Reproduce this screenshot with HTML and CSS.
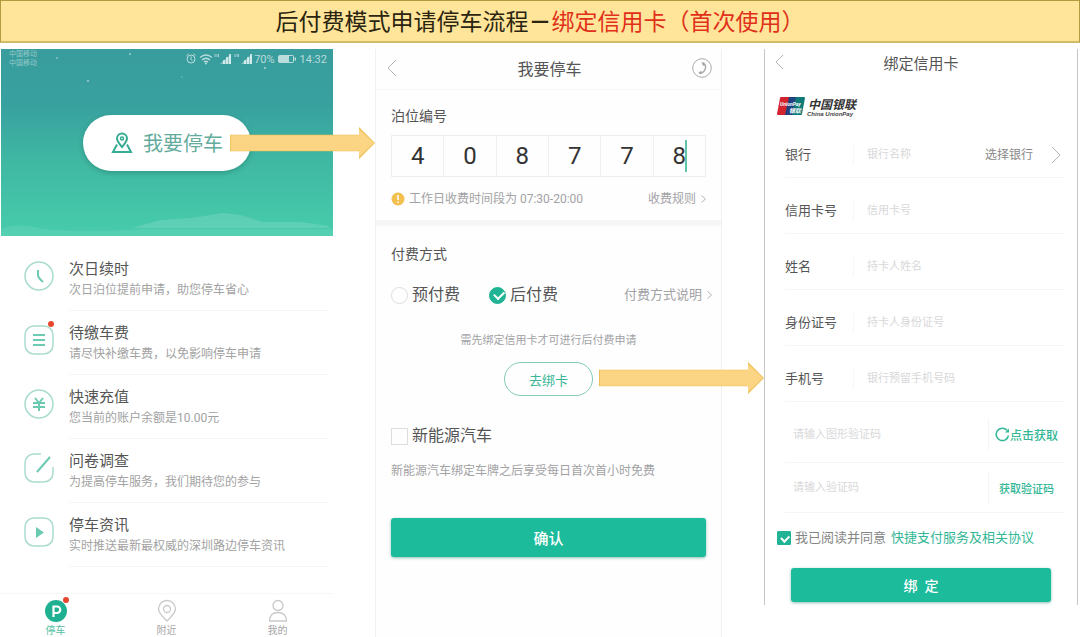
FILE: index.html
```
<!DOCTYPE html>
<html lang="zh-CN">
<head>
<meta charset="UTF-8">
<meta name="viewport" content="width=device-width, initial-scale=1.0">
<title>后付费模式申请停车流程</title>
<link rel="stylesheet" href="styles.css">
</head>
<body>

<h1 class="banner">后付费模式申请停车流程<b>－</b><span>绑定信用卡（首次使用）</span></h1>

<main class="flow">

  <!-- 首页 -->
  <section class="screen home">
    <div class="hero">
      <svg class="hero-bg" viewBox="0 0 332 187" preserveAspectRatio="none" aria-hidden="true">
        <path d="M134 178 L160 171 L190 169 L222 164 L240 166 L262 173 L300 173 L328 177 L328 179 L134 179Z" fill="#fff" opacity=".13"/>
        <path d="M0 180 Q20 173 42 180 Q90 184 140 180 L332 180 V187 H0Z" fill="#fff" opacity=".08"/>
        <circle cx="56" cy="9" r="1" fill="#fff" opacity=".4"/>
        <circle cx="129" cy="5" r="1" fill="#fff" opacity=".5"/>
        <circle cx="87" cy="32" r="1" fill="#fff" opacity=".5"/>
        <circle cx="181" cy="28" r="1" fill="#fff" opacity=".2"/>
        <circle cx="264" cy="19" r="1" fill="#fff" opacity=".6"/>
      </svg>
      <div class="status">
        <div class="carrier">中国移动<br>中国移动</div>
        <div class="status-icons">
          <svg width="68" height="12" viewBox="0 0 68 12" fill="none" stroke="currentColor" aria-hidden="true">
            <circle cx="5" cy="6" r="4"/>
            <path d="M5 3.500V6.500L6.500 8M0.500 2.500L2.500 0.800M9.500 2.500L7.500 0.800"/>
            <path d="M14 4.500Q20 -0.500 26 4.500M16 7Q20 3.500 24 7M18 9Q20 7.500 22 9" stroke-width="1.300"/>
            <circle cx="20" cy="10.500" r="1" fill="currentColor" stroke="none"/>
            <path d="M29 1v3M31 1v3M32.500 1v3M49 1v3M51 1v3M52.500 1v3" stroke-width=".8"/>
            <path d="M34 11L45 1V11zM55 11L66 1V11z" fill="currentColor" stroke="none" opacity=".6"/>
            <path d="M37 11h2V7h-2zM40 11h2V4h-2zM43 11h2V1h-2zM58 11h2V7h-2zM61 11h2V4h-2zM64 11h2V1h-2z" fill="currentColor" stroke="none"/>
          </svg>
          <span>70%</span>
          <svg width="19" height="10" viewBox="0 0 19 10" aria-hidden="true">
            <rect x=".5" y="1.500" width="15" height="7" rx="1" fill="none" stroke="currentColor"/>
            <path d="M1 2h10v6H1zM16.500 3.500h1.500v3h-1.500z" fill="currentColor"/>
          </svg>
          <span>14:32</span>
        </div>
      </div>
      <button class="park-btn" type="button">
        <svg width="22" height="22" viewBox="0 0 22 22" fill="none" stroke="#36ad92" stroke-width="2" aria-hidden="true">
          <path d="M11 15C8 11.500 6 9 6 6.500a5 5 0 0 1 10 0C16 9 14 11.500 11 15z"/>
          <circle cx="11" cy="6.500" r="1.500" stroke-width="1.500"/>
          <path d="M6 12.500L2 20H20L16 12.500"/>
        </svg>
        我要停车
      </button>
      <i class="arrow arrow-park"></i>
    </div>

    <ul class="menu">
      <li>
        <a href="#">
          <svg class="menu-icon" viewBox="0 0 30 30"><circle class="ring" cx="15" cy="15" r="14"/><path class="ink" d="M14 9v5.500q.5 2.500 5 6.500"/></svg>
          <span class="menu-text"><strong>次日续时</strong><small>次日泊位提前申请，助您停车省心</small></span>
        </a>
      </li>
      <li>
        <a href="#">
          <svg class="menu-icon" viewBox="0 0 30 30"><rect class="ring" x="1" y="1" width="28" height="28" rx="9"/><path class="ink" d="M9 10h12M9 15h12M9 20h12"/></svg>
          <i class="dot"></i>
          <span class="menu-text"><strong>待缴车费</strong><small>请尽快补缴车费，以免影响停车申请</small></span>
        </a>
      </li>
      <li>
        <a href="#">
          <svg class="menu-icon" viewBox="0 0 30 30"><circle class="ring" cx="15" cy="15" r="14"/><path class="ink" d="M11 9l4 5 4-5M9 14h12M9 18h12M15 14v8"/></svg>
          <span class="menu-text"><strong>快速充值</strong><small>您当前的账户余额是10.00元</small></span>
        </a>
      </li>
      <li>
        <a href="#">
          <svg class="menu-icon" viewBox="0 0 30 30"><path class="ring" d="M17 1h-7a9 9 0 0 0-9 9v10a9 9 0 0 0 9 9h10a9 9 0 0 0 9-9v-6"/><path class="ink" d="M13 19L26 4"/></svg>
          <span class="menu-text"><strong>问卷调查</strong><small>为提高停车服务，我们期待您的参与</small></span>
        </a>
      </li>
      <li>
        <a href="#">
          <svg class="menu-icon" viewBox="0 0 30 30"><rect class="ring" x="1" y="1" width="28" height="28" rx="9"/><path d="M12 10l8 5.500-8 5.500z" fill="#6ccab2"/></svg>
          <span class="menu-text"><strong>停车资讯</strong><small>实时推送最新最权威的深圳路边停车资讯</small></span>
        </a>
      </li>
    </ul>

    <nav class="tabs">
      <a class="active" href="#">
        <svg width="22" height="24" viewBox="0 0 22 24"><circle cx="11" cy="12" r="11" fill="#1fb092"/><path d="M8.500 18V7.500h3.500a3 3 0 0 1 0 6.500H8.500" fill="none" stroke="#fff" stroke-width="2.200"/></svg>
        <i class="dot"></i>
        停车
      </a>
      <a href="#">
        <svg width="22" height="24" viewBox="0 0 22 24" fill="none" stroke="#c9c9cc" stroke-width="1.300"><path d="M11 22C6 17 2.500 14 2.500 10a8.500 8.500 0 0 1 17 0C19.500 14 16 17 11 22z"/><circle cx="11" cy="10" r="3.500"/></svg>
        附近
      </a>
      <a href="#">
        <svg width="22" height="24" viewBox="0 0 22 24" fill="none" stroke="#c9c9cc" stroke-width="1.300"><circle cx="11" cy="6.500" r="5"/><path d="M2.500 22c0-6 3.500-8.500 8.500-8.500s8.500 2.500 8.500 8.500z"/></svg>
        我的
      </a>
    </nav>
  </section>

  <!-- 我要停车 -->
  <form class="screen park">
    <header class="topbar">
      <a href="#" aria-label="返回"><svg width="10" height="18" viewBox="0 0 10 18"><path class="chev" d="M9 1L1 9l8 8"/></svg></a>
      <h2>我要停车</h2>
      <a href="#" aria-label="电话"><svg width="20" height="20" viewBox="0 0 20 20"><circle cx="10" cy="10" r="9.300" fill="none" stroke="#a9a9ad"/><path d="M10.500 5q3.500 1 3 5t-5.500 5.500" fill="none" stroke="#a9a9ad" stroke-width="1.500"/><path d="M9.500 4.500l2.500 0 .8 2.500-1.800 1zM6.500 14.500l2.500-1.500 1.500 1.500-3 1.700z" fill="#a9a9ad"/></svg></a>
    </header>

    <div class="block">
      <h3>泊位编号</h3>
      <div class="digits">
        <input type="text" value="4" maxlength="1" aria-label="第1位">
        <input type="text" value="0" maxlength="1" aria-label="第2位">
        <input type="text" value="8" maxlength="1" aria-label="第3位">
        <input type="text" value="7" maxlength="1" aria-label="第4位">
        <input type="text" value="7" maxlength="1" aria-label="第5位">
        <span class="current"><input type="text" value="8" maxlength="1" aria-label="第6位"></span>
      </div>
      <div class="tip">
        <svg width="14" height="14" viewBox="0 0 14 14" aria-hidden="true"><circle cx="7" cy="7" r="6.500" fill="#f3bf4f"/><path d="M7 3v5M7 9.500v1.500" stroke="#fff" stroke-width="1.500"/></svg>
        <span>工作日收费时间段为 07:30-20:00</span>
        <a href="#">收费规则<svg width="5" height="8" viewBox="0 0 5 8"><path class="chev" d="M.5 .5L4.500 4 .5 7.500"/></svg></a>
      </div>
    </div>

    <div class="block pay">
      <h3>付费方式</h3>
      <div class="pay-row">
        <label><input type="radio" name="pay">预付费</label>
        <label><input type="radio" name="pay" checked>后付费</label>
        <a href="#">付费方式说明<svg width="5" height="8" viewBox="0 0 5 8"><path class="chev" d="M.5 .5L4.500 4 .5 7.500"/></svg></a>
      </div>
      <p class="hint">需先绑定信用卡才可进行后付费申请</p>
      <div class="bind">
        <button type="button">去绑卡</button>
        <i class="arrow arrow-bind"></i>
      </div>
      <label class="energy"><input type="checkbox">新能源汽车</label>
      <p class="note">新能源汽车绑定车牌之后享受每日首次首小时免费</p>
      <button class="primary" type="button">确认</button>
    </div>
  </form>

  <!-- 绑定信用卡 -->
  <form class="screen card">
    <header class="topbar">
      <a href="#" aria-label="返回"><svg width="9" height="16" viewBox="0 0 9 16"><path class="chev" d="M8 1L1 8l7 7"/></svg></a>
      <h2>绑定信用卡</h2>
    </header>
    <svg class="unionpay" width="82" height="20" viewBox="0 0 82 20" role="img" aria-label="中国银联">
      <path d="M4 0H15L11 18H1Q0 18 0 17L3 1Q3.200 0 4 0Z" fill="#d2232f"/>
      <path d="M12 0H21L17 18H8Z" fill="#21427f"/>
      <path d="M19 0H27Q28 0 28 1L25 17Q24.800 18 24 18H15Z" fill="#0d7a78"/>
      <text class="up-en" x="3" y="9" fill="#fff">UnionPay</text>
      <text class="up-zh" x="12" y="16" fill="#fff">银联</text>
      <text class="up-name" x="31" y="12">中国银联</text>
      <text class="up-sub" x="30" y="19">China UnionPay</text>
    </svg>

    <div class="fields">
      <div class="field">
        <label for="bank">银行</label>
        <input id="bank" type="text" placeholder="银行名称">
        <select aria-label="选择银行"><option>选择银行</option></select>
        <svg width="10" height="18" viewBox="0 0 10 18" aria-hidden="true"><path class="chev" d="M1 1l8 8-8 8"/></svg>
      </div>
      <div class="field"><label for="no">信用卡号</label><input id="no" type="text" placeholder="信用卡号"></div>
      <div class="field"><label for="name">姓名</label><input id="name" type="text" placeholder="持卡人姓名"></div>
      <div class="field"><label for="idno">身份证号</label><input id="idno" type="text" placeholder="持卡人身份证号"></div>
      <div class="field"><label for="tel">手机号</label><input id="tel" type="text" placeholder="银行预留手机号码"></div>
      <div class="code">
        <input type="text" placeholder="请输入图形验证码" aria-label="图形验证码">
        <button class="refresh" type="button"><svg width="15" height="15" viewBox="0 0 15 15"><path d="M13.500 8.500A6.200 6.200 0 1 1 12 3.200" fill="none" stroke="#33b796" stroke-width="1.500"/><path d="M14 1.500v4H10z" fill="#33b796"/></svg>点击获取</button>
      </div>
      <div class="code">
        <input type="text" placeholder="请输入验证码" aria-label="验证码">
        <button type="button">获取验证码</button>
      </div>
    </div>

    <div class="agree">
      <input id="agree" type="checkbox" checked>
      <label for="agree">我已阅读并同意</label>
      <a href="#">快捷支付服务及相关协议</a>
    </div>
    <button class="primary" type="button">绑&ensp;定</button>
  </form>

</main>

</body>
</html>
```

FILE: styles.css
```
* {
  box-sizing: border-box;
}

body {
  margin: 0;
  background: #fff;
  color: #555;
  font-family: Roboto, "Noto Sans CJK SC", sans-serif;
}

h1, h2, h3, p, ul {
  margin: 0;
  padding: 0;
  font-weight: normal;
}

a {
  color: inherit;
  text-decoration: none;
}

button, input, select {
  margin: 0;
  padding: 0;
  border: 0;
  background: none;
  color: inherit;
  font: inherit;
}

input {
  min-width: 0;
}

input::placeholder {
  color: #d8d8da;
}

.banner {
  height: 43px;
  border: 1px solid #b59a3d;
  border-bottom: 2px solid #d3bc63;
  background: #ffe599;
  color: #2a2410;
  font-family: "Noto Sans CJK SC", sans-serif;
  font-size: 23px;
  line-height: 38px;
  text-align: center;
}

.banner span {
  color: #e0301a;
}

.flow {
  display: grid;
  grid-template-columns: minmax(0, 333fr) minmax(0, 347fr) minmax(0, 314fr);
  column-gap: 42px;
  min-height: calc(100vh - 43px);
  padding: 6px 2px 0 0;
}

.screen {
  display: flex;
  flex-direction: column;
}

.chev {
  fill: none;
  stroke: #b5b5b8;
}

/* 流程箭头 */
.arrow {
  position: absolute;
  z-index: 1;
  height: 32px;
  background: #efbf55;
  clip-path: polygon(0 24%, calc(100% - 16px) 24%, calc(100% - 16px) 0, 100% 50%, calc(100% - 16px) 100%, calc(100% - 16px) 76%, 0 76%);
}

.arrow::before {
  content: "";
  position: absolute;
  inset: 1px;
  background: #fbd583;
  clip-path: polygon(0 24%, calc(100% - 15px) 24%, calc(100% - 15px) 3%, 100% 50%, calc(100% - 15px) 97%, calc(100% - 15px) 76%, 0 76%);
}

.dot {
  position: absolute;
  width: 6px;
  height: 6px;
  border-radius: 50%;
  background: #e5482f;
}

/* 首页 */
.hero {
  position: relative;
  display: flex;
  align-items: center;
  justify-content: center;
  height: 187px;
  margin-left: 1px;
  background: linear-gradient(#399c9d, #38a19f 30%, #40b9a3 62%, #47ccac);
}

.hero-bg {
  position: absolute;
  width: 100%;
  height: 100%;
}

.status {
  position: absolute;
  top: 0;
  left: 8px;
  right: 6px;
  display: flex;
  justify-content: space-between;
  color: rgba(255, 255, 255, .65);
}

.carrier {
  padding-top: 1px;
  font-size: 7px;
  line-height: 9px;
  opacity: .7;
}

.status-icons {
  display: flex;
  align-items: center;
  height: 20px;
  font-size: 11px;
}

.status-icons svg {
  margin: 0 3px;
}

.status-icons svg:first-child {
  margin: 0;
}

.park-btn {
  position: relative;
  display: flex;
  align-items: center;
  justify-content: center;
  gap: 10px;
  width: 168px;
  height: 56px;
  border-radius: 28px;
  background: #fff;
  box-shadow: 0 2px 5px rgba(20, 90, 80, .35);
  color: #63ab9d;
  font-size: 20px;
}

.arrow-park {
  top: 78px;
  left: 69%;
  right: -42px;
}

.menu {
  padding: 11px 4px 0 24px;
  list-style: none;
}

.menu a {
  position: relative;
  display: flex;
  gap: 15px;
}

.menu-icon {
  width: 30px;
  height: 30px;
  margin-top: 14px;
}

.menu .dot {
  top: 10px;
  left: 24px;
}

.ring {
  fill: none;
  stroke: #a9dccf;
  stroke-width: 1.5;
}

.ink {
  fill: none;
  stroke: #6ccab2;
  stroke-width: 2;
}

.menu-text {
  flex: 1;
  padding: 11px 0 10px;
  border-bottom: 1px solid #f4f4f4;
}

.menu strong, .menu small {
  display: block;
  font-weight: normal;
}

.menu strong {
  font-size: 15px;
  line-height: 22px;
}

.menu small {
  color: #a2a2a2;
  font-size: 12px;
  line-height: 20px;
}

.tabs {
  display: flex;
  margin-top: auto;
  border-top: 1px solid #f7f7f7;
}

.tabs a {
  position: relative;
  flex: 1;
  display: flex;
  flex-direction: column;
  align-items: center;
  gap: 2px;
  padding-top: 5px;
  color: #a5a5a8;
  font-size: 10px;
  line-height: 12px;
}

.tabs .active {
  color: #52bfa4;
}

.tabs .dot {
  top: 3px;
  left: calc(50% + 7px);
}

/* 顶部标题栏 */
.topbar {
  display: flex;
  align-items: center;
  justify-content: space-between;
}

.topbar a {
  display: flex;
  width: 20px;
}

/* 我要停车 */
.park {
  border: 1px solid #f1f1f3;
  border-width: 0 1px;
  background: #fefefe;
}

.park .topbar {
  height: 41px;
  padding: 0 9px 2px 11px;
  border-bottom: 1px solid #f7f7f8;
}

.park h2 {
  font-size: 16px;
}

.block {
  padding: 15px 15px 11px;
}

.block h3 {
  font-size: 14px;
  line-height: 22px;
}

.digits {
  display: flex;
  margin-top: 8px;
  border: 1px solid #ededf0;
}

.digits input {
  flex: 1;
  width: 100%;
  height: 40px;
  color: #333;
  font-size: 24px;
  text-align: center;
}

.digits input + input, .current {
  border-left: 1px solid #f0f0f2;
}

.current {
  position: relative;
  flex: 1;
}

.current::after {
  content: "";
  position: absolute;
  top: 4px;
  left: calc(50% + 6px);
  width: 2px;
  height: 32px;
  background: #62c5ab;
}

.tip {
  display: flex;
  align-items: center;
  gap: 4px;
  margin-top: 12px;
  color: #a2a2a5;
  font-size: 12px;
  line-height: 20px;
}

.tip a, .pay-row a {
  display: flex;
  align-items: center;
  gap: 5px;
  margin-left: auto;
}

.pay {
  padding-top: 17px;
  border-top: 6px solid #f7f6f7;
}

.pay-row {
  display: flex;
  gap: 29px;
  margin-top: 18px;
  margin-right: -6px;
  line-height: 24px;
}

.pay-row label, .energy {
  display: flex;
  align-items: center;
  gap: 4px;
  font-size: 16px;
}

.pay-row a {
  color: #a2a2a5;
  font-size: 13px;
}

input[type="radio"], input[type="checkbox"] {
  position: relative;
  appearance: none;
  width: 17px;
  height: 17px;
  border: 1px solid #dddde0;
}

input[type="radio"] {
  border-radius: 50%;
}

input[type="radio"]:checked, input[type="checkbox"]:checked {
  border-color: #20b394;
  background: #20b394;
}

input:checked::after {
  content: "";
  position: absolute;
  top: 25%;
  left: 25%;
  width: 50%;
  height: 30%;
  border: solid #fff;
  border-width: 0 0 2px 2px;
  transform: rotate(-45deg);
}

.hint {
  margin-top: 25px;
  color: #a2a2a5;
  font-size: 11px;
  line-height: 18px;
  text-align: center;
}

.bind {
  position: relative;
  margin-top: 12px;
  text-align: center;
}

.bind button {
  width: 89px;
  height: 34px;
  border: 1px solid #82cbb8;
  border-radius: 17px;
  color: #39b697;
  font-size: 13px;
  vertical-align: top;
}

.arrow-bind {
  top: 0;
  left: calc(50% + 50px);
  right: -58px;
}

.energy {
  margin-top: 28px;
  line-height: 24px;
}

.note {
  margin-top: 13px;
  color: #a2a2a5;
  font-size: 12px;
  line-height: 20px;
}

.primary {
  width: 100%;
  height: 39px;
  border-radius: 3px;
  background: #1cbb9b;
  box-shadow: 0 1px 3px rgba(28, 130, 110, .5);
  color: #fff;
  font-size: 15px;
  font-weight: 500;
}

.pay .primary {
  margin-top: 37px;
}

/* 绑定信用卡 */
.card {
  align-self: start;
  padding-bottom: 3px;
  border: solid #c6c6c8;
  border-width: 0 1px;
}

.card .topbar {
  height: 26px;
  padding: 0 10px;
}

.card .topbar::after {
  content: "";
  width: 20px;
}

.card h2 {
  font-size: 15px;
}

.unionpay {
  margin: 22px 0 5px 12px;
}

.unionpay text {
  font-weight: bold;
  font-style: italic;
}

.up-en {
  font-size: 5px;
}

.up-zh {
  font-size: 6px;
}

.up-name {
  fill: #333;
  font-size: 12px;
}

.up-sub {
  fill: #444;
  font-family: "Liberation Sans", sans-serif;
  font-size: 6px;
}

.fields {
  padding: 0 13px 0 20px;
}

.field {
  display: flex;
  align-items: center;
  padding: 23px 0 12px;
  border-bottom: 1px solid #f5f5f6;
  font-size: 13px;
  line-height: 20px;
}

.field label {
  width: 69px;
  border-right: 1px solid #f7f7f8;
}

.field input {
  flex: 1;
  height: 20px;
  padding-left: 13px;
  font-size: 11px;
}

.field select {
  appearance: none;
  margin-right: 17px;
  color: #888;
  font-size: 12px;
}

.field svg {
  margin: 1px 3px 1px 0;
}

.code {
  display: flex;
  align-items: center;
  height: 61px;
  padding-top: 4px;
  border-bottom: 1px solid #f5f5f6;
}

.code + .code {
  height: 50px;
  padding-top: 0;
}

.code input {
  flex: 1;
  height: 32px;
  padding-left: 8px;
  font-size: 11px;
}

.code button {
  display: flex;
  align-items: center;
  justify-content: center;
  width: 76px;
  height: 32px;
  border-left: 1px solid #f5f5f6;
  color: #33b796;
  font-size: 11px;
  font-weight: 500;
}

.code .refresh {
  font-size: 12px;
}

.agree {
  display: flex;
  align-items: center;
  margin: 15px 0 20px 12px;
  font-size: 13px;
  line-height: 20px;
}

.agree input[type="checkbox"] {
  width: 14px;
  height: 14px;
  border-radius: 1px;
}

.agree label {
  margin: 0 5px 0 4px;
  color: #858585;
}

.agree a {
  color: #33b796;
}

.card .primary {
  align-self: center;
  width: calc(100% - 52px);
  height: 34px;
  font-size: 14px;
}
```
